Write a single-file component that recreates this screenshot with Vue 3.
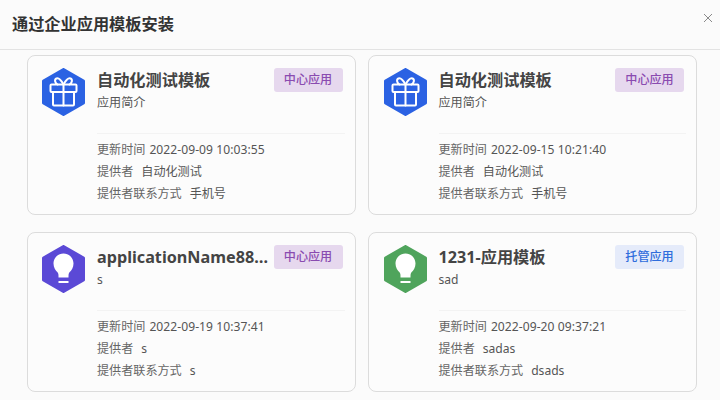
<script setup>
const cards = [
  { name: '自动化测试模板', desc: '应用简介', time: '2022-09-09 10:03:55', provider: '自动化测试', contact: '手机号', icon: 'gift', color: '#2b62e3', tag: '中心应用', tagType: 'center' },
  { name: '自动化测试模板', desc: '应用简介', time: '2022-09-15 10:21:40', provider: '自动化测试', contact: '手机号', icon: 'gift', color: '#2b62e3', tag: '中心应用', tagType: 'center' },
  { name: 'applicationName88…', desc: 's', time: '2022-09-19 10:37:41', provider: 's', contact: 's', icon: 'bulb', color: '#5b49d6', tag: '中心应用', tagType: 'center' },
  { name: '1231-应用模板', desc: 'sad', time: '2022-09-20 09:37:21', provider: 'sadas', contact: 'dsads', icon: 'bulb', color: '#4fa45c', tag: '托管应用', tagType: 'hosted' }
]
</script>

<template>
  <div class="page">
    <header class="head">
      <h1 class="title">通过企业应用模板安装</h1>
      <svg class="close" width="10" height="10" viewBox="0 0 10 10" aria-label="close">
        <path d="M1 1l8 8M9 1l-8 8" stroke="#8a8a8a" stroke-width="1" fill="none" />
      </svg>
    </header>
    <main class="grid">
      <article v-for="(c, i) in cards" :key="i" class="card">
        <div class="top">
          <svg class="hex" width="43" height="48" viewBox="0 0 43 48">
            <path d="M21.500 1.500L41.500 13V35L21.500 46.500L1.500 35V13Z" :fill="c.color" :stroke="c.color" stroke-width="3" stroke-linejoin="round" />
            <g v-if="c.icon === 'gift'" fill="none" stroke="#fff" stroke-width="2" stroke-linejoin="round" stroke-linecap="round">
              <rect x="8.500" y="16.500" width="26" height="7.500" rx="1" />
              <path d="M11 24V36.500a1 1 0 0 0 1 1H31a1 1 0 0 0 1-1V24" />
              <path d="M21.500 16.500V37.500" />
              <path d="M21.500 16.500C19 12 16.500 9.800 14.500 10.500C12.200 11.400 12.800 15 15.500 16.500" />
              <path d="M21.500 16.500C24 12 26.500 9.800 28.500 10.500C30.800 11.400 30.200 15 27.500 16.500" />
            </g>
            <g v-else>
              <path d="M21.500 8.500C15.500 8.500 11.500 13.200 11.500 18.500C11.500 22.500 13.500 25.300 15.500 27.300C16.500 28.300 16.500 30 16.500 32.500H26.500C26.500 30 26.500 28.300 27.500 27.300C29.500 25.300 31.500 22.500 31.500 18.500C31.500 13.200 27.500 8.500 21.500 8.500Z" fill="#fff" />
              <rect x="16.500" y="36" width="10" height="2" fill="#fff" />
            </g>
          </svg>
          <div class="info">
            <div class="row1">
              <h2 class="name">{{ c.name }}</h2>
              <span class="tag" :class="c.tagType">{{ c.tag }}</span>
            </div>
            <p class="desc">{{ c.desc }}</p>
          </div>
        </div>
        <dl class="meta">
          <div class="line"><dt>更新时间</dt><dd class="tight">{{ c.time }}</dd></div>
          <div class="line"><dt>提供者</dt><dd>{{ c.provider }}</dd></div>
          <div class="line"><dt>提供者联系方式</dt><dd>{{ c.contact }}</dd></div>
        </dl>
      </article>
    </main>
  </div>
</template>

<style scoped>
.page {
  width: 720px;
  height: 400px;
  overflow: hidden;
  background: #fbfbfb;
  color: #444;
  font-family: "Noto Sans", "Noto Sans CJK SC", sans-serif;
}
.head {
  height: 50px;
  box-sizing: border-box;
  border-bottom: 1px solid #e3e3e3;
  padding: 0 7px 0 12px;
  display: flex;
  justify-content: space-between;
  align-items: flex-start;
}
.title {
  margin: 12px 0 0;
  font-size: 16.2px;
  line-height: 24px;
  font-weight: 700;
  color: #333;
}
.close {
  margin-top: 13px;
}
.grid {
  display: grid;
  grid-template-columns: 329px 329px;
  grid-auto-rows: 160px;
  column-gap: 12.5px;
  row-gap: 17px;
  padding: 4.5px 0 0 26.5px;
}
.card {
  box-sizing: border-box;
  border: 1px solid #dcdcdc;
  border-radius: 8px;
  background: #fcfcfc;
  padding: 12.5px 12px 0 14.5px;
}
.top {
  display: flex;
  gap: 12px;
  height: 65px;
}
.hex {
  flex: none;
}
.info {
  flex: 1;
  min-width: 0;
}
.row1 {
  display: flex;
  align-items: flex-start;
  gap: 4px;
  height: 24px;
}
.name {
  flex: 1;
  min-width: 0;
  margin: 0;
  font-size: 16.2px;
  line-height: 24px;
  font-weight: 700;
  color: #444;
  white-space: nowrap;
  overflow: hidden;
  text-overflow: ellipsis;
}
.tag {
  flex: none;
  width: 69px;
  height: 24px;
  line-height: 24px;
  text-align: center;
  font-size: 12.1px;
  font-weight: 500;
  border-radius: 3px;
}
.center {
  background: #e6d8ee;
  color: #8a4bb0;
}
.hosted {
  background: #e5ebfa;
  color: #2f6ddc;
}
.desc {
  margin: 2px 0 0;
  font-size: 12.1px;
  line-height: 18px;
  color: #555;
}
.meta {
  margin: 0 -2px 0 55px;
  padding-top: 5px;
  border-top: 1px solid #f3f3f3;
  font-size: 12.1px;
  color: #666;
}
.line {
  display: flex;
  height: 22px;
  line-height: 22px;
}
dt {
  margin: 0;
}
dd {
  margin: 0 0 0 8px;
  color: #555;
}
dd.tight {
  margin-left: 4px;
  letter-spacing: 0.05px;
}
</style>
